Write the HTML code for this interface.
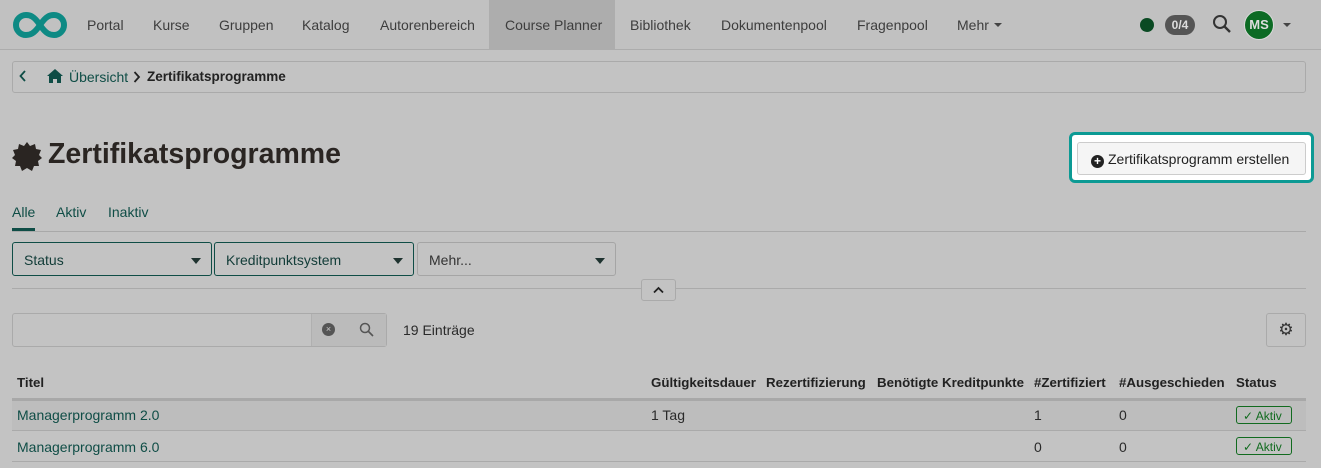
<!DOCTYPE html>
<html><head><meta charset="utf-8"><style>
*{box-sizing:border-box;margin:0;padding:0}
body{width:1321px;height:468px;overflow:hidden;background:#c3c3c3;font-family:"Liberation Sans",sans-serif;font-size:14px;color:#2a2a2a;position:relative}
.a{position:absolute;white-space:nowrap}
.nav{position:absolute;left:0;top:0;width:1321px;height:50px;background:#c1c1c1;border-bottom:1px solid #acacac}
.nav .i{position:absolute;top:17px;color:#3d3d3d;font-size:14px}
.lnk{color:#0f4d46}
.box{position:absolute;border:1px solid #aaa;border-radius:3px}
.sel{position:absolute;top:242px;height:34px;border:1px solid #0f4d46;border-radius:3px;padding:9px 11px;color:#123c38}
.sel:after{content:"";position:absolute;right:10px;top:15px;border-left:5px solid transparent;border-right:5px solid transparent;border-top:6px solid #1f3330}
.h{position:absolute;top:375px;font-weight:bold;font-size:13.3px;color:#222}
.badge{position:absolute;left:1236px;width:56px;height:18px;border:1px solid #116b1f;border-radius:3px;color:#116b1f;font-size:12px;padding:2px 0 0 6px}
</style></head><body>
<div class="nav">
<svg class="a" style="left:13px;top:11px" width="54" height="28" viewBox="0 0 54 28"><path d="M27 14C21 5 17 4 13 4A10 10 0 0 0 13 24C17 24 21 23 27 14C33 5 37 4 41 4A10 10 0 0 1 41 24C37 24 33 23 27 14Z" fill="none" stroke="#0e8a84" stroke-width="6"/></svg>
<span class="i" style="left:87px">Portal</span>
<span class="i" style="left:153px">Kurse</span>
<span class="i" style="left:219px">Gruppen</span>
<span class="i" style="left:302px">Katalog</span>
<span class="i" style="left:380px">Autorenbereich</span>
<div class="a" style="left:489px;top:0;width:126px;height:50px;background:#adadad"></div>
<span class="i" style="left:505px">Course Planner</span>
<span class="i" style="left:630px">Bibliothek</span>
<span class="i" style="left:721px">Dokumentenpool</span>
<span class="i" style="left:857px">Fragenpool</span>
<span class="i" style="left:957px">Mehr</span>
<div class="a" style="left:994px;top:23px;border-left:4px solid transparent;border-right:4px solid transparent;border-top:4px solid #444"></div>
<div class="a" style="left:1140px;top:18px;width:14px;height:14px;border-radius:50%;background:#0a4a23"></div>
<div class="a" style="left:1165px;top:15px;width:30px;height:20px;border-radius:10px;background:#555;color:#ddd;font-size:12px;font-weight:bold;text-align:center;line-height:20px">0/4</div>
<svg class="a" style="left:1212px;top:14px" width="20" height="20" viewBox="0 0 20 20"><circle cx="8" cy="8" r="6" fill="none" stroke="#333" stroke-width="2"/><path d="M12.5 12.5L18 18" stroke="#333" stroke-width="2.4"/></svg>
<div class="a" style="left:1244px;top:10px;width:30px;height:30px;border-radius:50%;background:#0c6b24;border:1px solid #d9d9d9;color:#ddd;font-size:13px;font-weight:bold;text-align:center;line-height:28px">MS</div>
<div class="a" style="left:1283px;top:23px;border-left:4px solid transparent;border-right:4px solid transparent;border-top:4px solid #444"></div>
</div>
<div class="box" style="left:12px;top:61px;width:1294px;height:32px"></div>
<svg class="a" style="left:19px;top:70px" width="8" height="12" viewBox="0 0 8 12"><path d="M6 1L1.5 6 6 11" fill="none" stroke="#0f4d46" stroke-width="1.8"/></svg>
<svg class="a" style="left:47px;top:69px" width="16" height="14" viewBox="0 0 16 14"><path d="M8 0L0 7H2V14H6V10H10V14H14V7H16Z" fill="#0f4d46"/></svg>
<span class="a lnk" style="left:69px;top:69px">Übersicht</span>
<svg class="a" style="left:133px;top:71px" width="8" height="12" viewBox="0 0 8 12"><path d="M1.5 1L6 6 1.5 11" fill="none" stroke="#222" stroke-width="1.8"/></svg>
<span class="a" style="left:147px;top:69px;font-weight:bold;color:#222;font-size:13.5px">Zertifikatsprogramme</span>
<svg class="a" style="left:11px;top:141px" width="32" height="32" viewBox="0 0 32 32"><path d="M16 1L19 5 24 3 25 8 30 9 28 14 31 17 27 20 28 25 23 25 21 30 16 27 11 30 9 25 4 25 5 20 1 17 4 14 2 9 7 8 8 3 13 5Z" fill="#2a2522"/></svg>
<span class="a" style="left:48px;top:138px;font-size:28.5px;font-weight:bold;color:#2a2522">Zertifikatsprogramme</span>
<div class="a" style="left:1069px;top:132px;width:245px;height:51px;border:3px solid #0c9a94;border-radius:6px;background:#fff"></div>
<div class="a" style="left:1077px;top:142px;width:229px;height:33px;border:1px solid #ccc;border-radius:3px;background:#f5f5f5;padding:8px 0 0 13px;color:#222;font-size:14px"><span style="display:inline-block;width:13px;height:13px;border-radius:50%;background:#222;color:#fff;font-size:12px;line-height:13px;text-align:center;font-weight:bold;vertical-align:-1px;margin-right:4px">+</span>Zertifikatsprogramm erstellen</div>
<span class="a lnk" style="left:12px;top:204px">Alle</span>
<span class="a lnk" style="left:56px;top:204px">Aktiv</span>
<span class="a lnk" style="left:108px;top:204px">Inaktiv</span>
<div class="a" style="left:12px;top:231px;width:1294px;height:1px;background:#a9a9a9"></div>
<div class="a" style="left:12px;top:228px;width:23px;height:3px;background:#0f4d46"></div>
<div class="sel" style="left:12px;width:200px">Status</div>
<div class="sel" style="left:214px;width:200px">Kreditpunktsystem</div>
<div class="sel" style="left:417px;width:199px;border-color:#a5a5a5;color:#333">Mehr...</div>
<div class="a" style="left:12px;top:288px;width:1294px;height:1px;background:#aaa"></div>
<div class="box" style="left:641px;top:279px;width:35px;height:22px;background:#c3c3c3"></div>
<svg class="a" style="left:653px;top:286px" width="11" height="8" viewBox="0 0 11 8"><path d="M1 6.5L5.5 2 10 6.5" fill="none" stroke="#222" stroke-width="1.8"/></svg>
<div class="box" style="left:12px;top:313px;width:375px;height:34px"></div>
<div class="a" style="left:311px;top:314px;width:75px;height:32px;background:#bbb;border-left:1px solid #b0b0b0"></div>
<div class="a" style="left:322px;top:323px;width:13px;height:13px;border-radius:50%;background:#555;color:#ccc;font-size:9px;text-align:center;line-height:13px">×</div>
<svg class="a" style="left:359px;top:322px" width="15" height="15" viewBox="0 0 15 15"><circle cx="6" cy="6" r="4.5" fill="none" stroke="#555" stroke-width="1.5"/><path d="M9.5 9.5L14 14" stroke="#555" stroke-width="1.6"/></svg>
<span class="a" style="left:403px;top:322px">19 Einträge</span>
<div class="box" style="left:1266px;top:313px;width:40px;height:34px;text-align:center;line-height:32px;font-size:17px;color:#333">⚙</div>
<span class="h" style="left:17px">Titel</span>
<span class="h" style="left:651px">Gültigkeitsdauer</span>
<span class="h" style="left:766px">Rezertifizierung</span>
<span class="h" style="left:877px">Benötigte Kreditpunkte</span>
<span class="h" style="left:1034px">#Zertifiziert</span>
<span class="h" style="left:1119px">#Ausgeschieden</span>
<span class="h" style="left:1236px">Status</span>
<div class="a" style="left:12px;top:398px;width:1294px;height:3px;background:#a8a8a8"></div>
<div class="a" style="left:12px;top:401px;width:1294px;height:29px;background:#bdbdbd"></div>
<div class="a" style="left:12px;top:430px;width:1294px;height:1px;background:#aaa"></div>
<div class="a" style="left:12px;top:461px;width:1294px;height:1px;background:#aaa"></div>
<span class="a lnk" style="left:17px;top:407px">Managerprogramm 2.0</span>
<span class="a" style="left:651px;top:407px">1 Tag</span>
<span class="a" style="left:1034px;top:407px">1</span>
<span class="a" style="left:1119px;top:407px">0</span>
<div class="badge" style="top:406px">✓ Aktiv</div>
<span class="a lnk" style="left:17px;top:439px">Managerprogramm 6.0</span>
<span class="a" style="left:1034px;top:439px">0</span>
<span class="a" style="left:1119px;top:439px">0</span>
<div class="badge" style="top:437px">✓ Aktiv</div>
</body></html>
